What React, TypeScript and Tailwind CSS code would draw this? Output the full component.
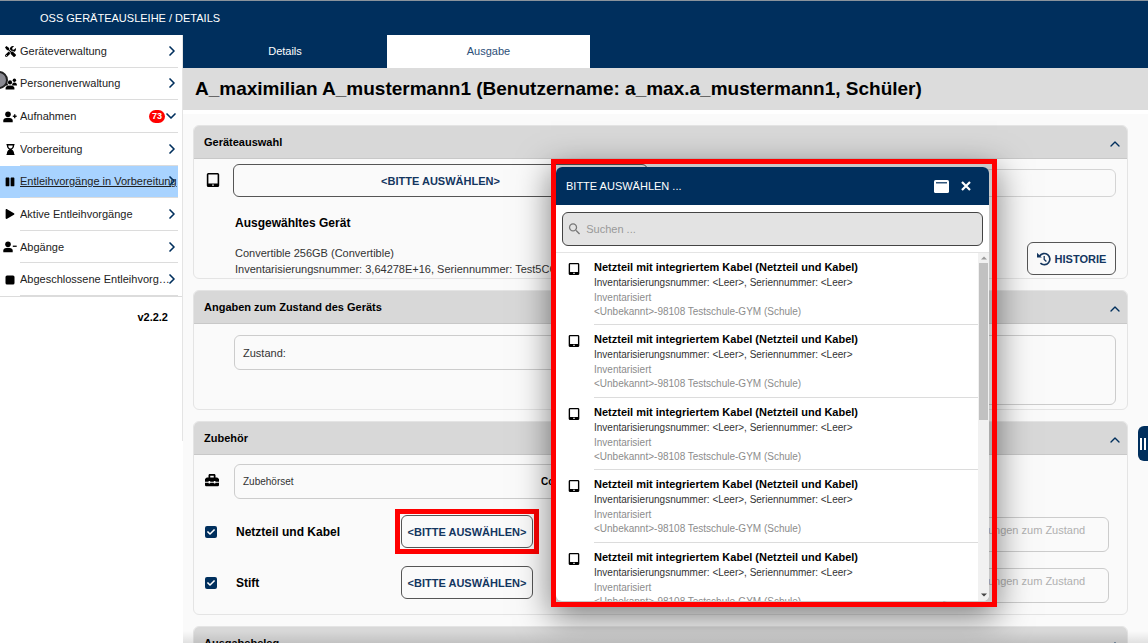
import type { ReactNode } from "react";
import {
  FaCheck,
  FaHourglassEnd,
  FaPause,
  FaPlay,
  FaToolbox,
  FaTools,
} from "react-icons/fa";
import { MdSearch } from "react-icons/md";
import { ChevronDown, ChevronRight, ChevronUp } from "lucide-react";

const PersonIcon = ({ plus = false }: { plus?: boolean }) => (
  <svg viewBox="0 0 14 12" className="h-3 w-3.5" fill="currentColor">
    <circle cx="5" cy="3.2" r="2.8" />
    <path d="M0.3 11.2V9.6C0.3 7.8 2 6.8 5 6.8s4.7 1 4.7 2.8v1.6z" />
    <path d="M9.8 4.6h3.9v1.3H9.8z" />
    {plus && <path d="M11.1 3.2h1.3v4h-1.3z" />}
  </svg>
);

const PeopleIcon = () => (
  <svg viewBox="0 0 14 12" className="h-3 w-3.5" fill="currentColor">
    <circle cx="2.6" cy="2.2" r="1.7" />
    <circle cx="11.4" cy="2.2" r="1.7" />
    <circle cx="7" cy="4.4" r="2.1" />
    <path d="M0 7.6C0 5.6 1 4.6 2.6 4.6c.9 0 1.5.3 1.9.8.1 1 .5 1.6 1 2.2z" />
    <path d="M14 7.6c0-2-1-3-2.6-3-.9 0-1.5.3-1.9.8-.1 1-.5 1.6-1 2.2z" />
    <path d="M2.6 11.5V10c0-1.6 1.6-2.6 4.4-2.6s4.4 1 4.4 2.6v1.5z" />
  </svg>
);

const SquareIcon = () => (
  <svg viewBox="0 0 10 10" className="size-2.5" fill="currentColor">
    <rect x="0.5" y="0.5" width="9" height="9" rx="1.5" />
  </svg>
);

const TabletIcon = ({ className }: { className: string }) => (
  <svg viewBox="0 0 14 14" className={className} fill="currentColor">
    <path
      fillRule="evenodd"
      d="M2.4 0h9.2A1.6 1.6 0 0 1 13.2 1.6v10.8a1.6 1.6 0 0 1-1.6 1.6H2.4A1.6 1.6 0 0 1 .8 12.4V1.6A1.6 1.6 0 0 1 2.4 0zM2.4 1.6v9h9.2v-9zM6.2 11.5v1.3h1.6v-1.3z"
    />
  </svg>
);

const WindowIcon = () => (
  <svg viewBox="0 0 15 13" className="h-[13px] w-[15px]">
    <rect width="15" height="13" rx="1.6" fill="#fff" />
    <rect x="2" y="2.2" width="11" height="1.2" fill="#002f5d" />
  </svg>
);

const HistoryIcon = () => (
  <svg viewBox="0 0 14 14" className="size-3.5" fill="none">
    <path
      d="M2.6 4A5.6 5.6 0 1 1 3.4 11.2"
      stroke="currentColor"
      strokeWidth="1.7"
    />
    <path d="M0 .8v4.6h4.8z" fill="currentColor" />
    <path d="M7.2 4v3.4l2.2 2" stroke="currentColor" strokeWidth="1.3" />
  </svg>
);

const navItems: {
  label: string;
  icon: ReactNode;
  active?: boolean;
  badge?: number;
}[] = [
  { label: "Geräteverwaltung", icon: <FaTools className="size-[11px]" /> },
  { label: "Personenverwaltung", icon: <PeopleIcon /> },
  { label: "Aufnahmen", icon: <PersonIcon plus />, badge: 73 },
  { label: "Vorbereitung", icon: <FaHourglassEnd className="size-[11px]" /> },
  {
    label: "Entleihvorgänge in Vorbereitung",
    icon: <FaPause className="size-2.5" />,
    active: true,
  },
  { label: "Aktive Entleihvorgänge", icon: <FaPlay className="size-2.5" /> },
  { label: "Abgänge", icon: <PersonIcon /> },
  { label: "Abgeschlossene Entleihvorgänge", icon: <SquareIcon /> },
];

const Sidebar = () => (
  <aside className="w-[183px] shrink-0 bg-white">
    <nav className="h-[406px] border-r border-[#e4e4e4]">
      <ul className="grid h-[262px] grid-cols-1 grid-rows-8 border-b border-[#dcdcdc]">
        {navItems.map(({ label, icon, active, badge }) => (
          <li
            key={label}
            className={active ? "mr-1 min-w-0 bg-[#a8d3ff]" : "mr-1 min-w-0"}
          >
            <a href="#" className="flex h-full items-center text-[#222]">
              <span className="flex w-5 shrink-0 items-center justify-center text-black">
                {icon}
              </span>
              <span className="flex h-full min-w-0 flex-1 items-center border-b border-[#dcdcdc]">
                <span
                  className={
                    active
                      ? "min-w-0 flex-1 whitespace-nowrap underline"
                      : "-mr-2 min-w-0 flex-1 truncate"
                  }
                >
                  {label}
                </span>
                {badge && (
                  <span className="z-10 -mr-0.5 rounded-full bg-[#f00] px-[3px] text-[9px] leading-[13px] font-bold text-white">
                    {badge}
                  </span>
                )}
                {badge ? (
                  <ChevronDown
                    className="-mr-px size-4 shrink-0 text-[#002f5d]"
                    strokeWidth={2.5}
                  />
                ) : (
                  <ChevronRight
                    className="-mr-0.5 size-4 shrink-0 text-[#002f5d]"
                    strokeWidth={2.5}
                  />
                )}
              </span>
            </a>
          </li>
        ))}
      </ul>
      <p className="mt-3 mr-3.5 text-right font-bold">v2.2.2</p>
    </nav>
  </aside>
);

const Panel = ({
  title,
  className,
  children,
}: {
  title: string;
  className: string;
  children?: ReactNode;
}) => (
  <section
    className={`overflow-hidden rounded-md border border-[#e4e4e4] ${className}`}
  >
    <h2 className="flex h-[33px] items-center justify-between border-b border-[#c8c8c8] bg-[#d8d8d8] pr-1 pl-2.5 font-bold">
      {title}
      <button type="button" aria-label={`${title} einklappen`}>
        <ChevronUp className="mt-1 size-4 text-[#002f5d]" strokeWidth={2} />
      </button>
    </h2>
    {children}
  </section>
);

const outlineButton =
  "rounded-md border border-[#555] bg-[#fafafa] font-bold text-[#14365f]";

const AccessoryRow = ({
  name,
  highlight,
}: {
  name: string;
  highlight?: boolean;
}) => (
  <div className="flex h-[51px] items-center pr-[18px] pl-[11px]">
    <label className="flex w-[190px] items-center gap-[19px] text-[12px] font-bold">
      <span className="relative flex size-3">
        <input
          type="checkbox"
          defaultChecked
          className="size-3 appearance-none rounded-xs bg-[#002f5d]"
        />
        <FaCheck className="absolute top-0.5 left-0.5 size-2 text-white" />
      </span>
      {name}
    </label>
    <div
      className={
        highlight
          ? "border-[5px] border-[#f00] p-px"
          : "border-[5px] border-transparent p-px"
      }
    >
      <button type="button" className={`h-[33px] w-[132px] ${outlineButton}`}>
        {"<BITTE AUSWÄHLEN>"}
      </button>
    </div>
    <textarea
      aria-label={`Anmerkungen zum Zustand ${name}`}
      placeholder="Anmerkungen zum Zustand"
      rows={1}
      className="mt-[5px] ml-auto h-[35px] w-[168px] resize-none rounded-md border border-[#ccc] px-2 py-1 leading-4 placeholder:text-[#b0b0b0]"
    />
  </div>
);

const PickerItem = () => (
  <li className="flex pl-3">
    <TabletIcon className="mt-2.5 size-3 shrink-0" />
    <div className="ml-3.5 flex-1 border-b border-[#dcdcdc] pt-1.5 text-[10px] leading-[14px] text-[#8c8c8c]">
      <p className="text-[11px] leading-4 font-bold text-black">
        Netzteil mit integriertem Kabel (Netzteil und Kabel)
      </p>
      <p className="leading-4 text-[#333]">
        {"Inventarisierungsnummer: <Leer>, Seriennummer: <Leer>"}
      </p>
      <p>Inventarisiert</p>
      <p>{"<Unbekannt>-98108 Testschule-GYM (Schule)"}</p>
    </div>
  </li>
);

const PickerDialog = () => (
  <div className="absolute top-[159px] left-[551px] h-[448px] w-[446px] border-[5px] border-[#f00] bg-black/20 bg-clip-padding pt-[3px] pr-[3px] pb-px shadow-[0_10px_32px_rgba(0,0,0,0.5)]">
    <div
      role="dialog"
      aria-label="Bitte auswählen"
      className="flex h-full flex-col overflow-hidden rounded-md bg-white"
    >
      <header className="flex h-[38px] shrink-0 items-center gap-2.5 bg-[#002f5d] pr-4 pl-2.5 text-white">
        <h2 className="flex-1">BITTE AUSWÄHLEN ...</h2>
        <button type="button" aria-label="Maximieren">
          <WindowIcon />
        </button>
        <button type="button" aria-label="Schließen">
          <svg viewBox="0 0 14 14" className="size-3.5">
            <path
              d="M3 3l8 8M11 3l-8 8"
              stroke="#fff"
              strokeWidth="2.2"
              fill="none"
            />
          </svg>
        </button>
      </header>
      <label className="mx-1.5 mt-[7px] flex h-[34px] shrink-0 items-center gap-1 rounded-md border border-[#444] bg-[#e3e3e3] px-1">
        <MdSearch className="size-4 text-[#777]" />
        <input
          type="text"
          aria-label="Suchen"
          placeholder="Suchen ..."
          className="w-full bg-transparent outline-none placeholder:text-[#999]"
        />
      </label>
      <div className="mt-1.5 flex min-h-0 flex-1 border-t border-[#e4e4e4]">
        <div className="flex-1 overflow-hidden">
          <ul className="grid h-[362px] grid-rows-5">
            {[0, 1, 2, 3, 4].map((i) => (
              <PickerItem key={i} />
            ))}
          </ul>
        </div>
        <div className="flex w-[11px] flex-col items-center bg-[#f1f1f1]">
          <svg viewBox="0 0 10 10" className="size-2.5">
            <path d="M2 6.5L5 3.5l3 3z" fill="#999" />
          </svg>
          <div className="h-[157px] w-[9px] bg-[#c1c1c1]" />
          <svg viewBox="0 0 10 10" className="mt-auto size-2.5">
            <path d="M2 2.5L5 5.5l3-3z" fill="#444" />
          </svg>
        </div>
      </div>
    </div>
  </div>
);

export default function App() {
  return (
    <div className="relative flex h-screen flex-col overflow-hidden bg-[#fafafa] font-['Liberation_Sans',Arial,sans-serif] text-[11px] leading-4 text-black">
      <header className="flex h-[35px] shrink-0 items-center border-t border-[#8a939c] bg-[#002f5d] pl-10 text-white">
        <h1>OSS GERÄTEAUSLEIHE / DETAILS</h1>
      </header>

      <div className="flex min-h-0 flex-1">
        <Sidebar />

        <main className="min-w-0 flex-1">
          <div role="tablist" className="flex h-[33px] bg-[#002f5d]">
            <button
              type="button"
              role="tab"
              className="w-[204px] pb-0.5 text-white"
            >
              Details
            </button>
            <button
              type="button"
              role="tab"
              aria-selected="true"
              className="w-[203px] bg-white pb-0.5 text-[#2c4f78]"
            >
              Ausgabe
            </button>
          </div>
          <h2 className="flex h-[42px] items-center bg-[#dcdcdc] pl-3 text-[19px] font-bold">
            A_maximilian A_mustermann1 (Benutzername: a_max.a_mustermann1,
            Schüler)
          </h2>
          <div className="h-1 bg-white" />

          <div className="flex flex-col gap-[11px] pt-[11px] pr-5 pl-2.5">
            <Panel title="Geräteauswahl" className="h-[154px]">
              <div className="flex items-end gap-2.5 pt-[5px] pr-[11px] pl-3">
                <TabletIcon className="mb-2.5 size-3.5 shrink-0" />
                <button
                  type="button"
                  className={`ml-[3px] h-[33px] w-[415px] ${outlineButton}`}
                >
                  {"<BITTE AUSWÄHLEN>"}
                </button>
                <input
                  type="text"
                  aria-label="Gerätenummer"
                  className="h-7 min-w-0 flex-1 rounded-md border border-[#d4d4d4] px-2"
                />
              </div>
              <div className="flex justify-between pr-[11px] pl-[41px]">
                <div className="pt-[18px]">
                  <h3 className="text-[12px] font-bold">Ausgewähltes Gerät</h3>
                  <p className="mt-3.5 text-[#333]">
                    Convertible 256GB (Convertible)
                    <br />
                    Inventarisierungsnummer: 3,64278E+16, Seriennummer: Test5CG
                  </p>
                </div>
                <button
                  type="button"
                  className={`mt-[45px] flex h-[33px] w-[89px] items-center justify-center gap-1 ${outlineButton}`}
                >
                  <HistoryIcon />
                  HISTORIE
                </button>
              </div>
            </Panel>

            <Panel
              title="Angaben zum Zustand des Geräts"
              className="h-[120px]"
            >
              <div className="flex items-start gap-2.5 pt-[11px] pr-[11px] pl-10">
                <label className="flex h-[35px] w-[414px] items-center gap-2 rounded-md border border-[#ccc] px-2 text-[#333]">
                  Zustand:
                  <input type="text" className="min-w-0 flex-1 outline-none" />
                </label>
                <textarea
                  aria-label="Anmerkungen"
                  className="h-[70px] min-w-0 flex-1 resize-none rounded-md border border-[#ccc]"
                />
              </div>
            </Panel>

            <Panel title="Zubehör" className="h-[194px]">
              <div className="flex items-center pt-[9px] pl-[11px]">
                <FaToolbox className="mb-1 size-3.5" />
                <div className="ml-[15px] flex h-[35px] w-[414px] items-center justify-between rounded-md border border-[#ccc] px-2 text-[10px]">
                  <span className="text-[#333]">Zubehörset</span>
                  <span className="w-[98px] font-bold">Convertible</span>
                </div>
              </div>
              <div className="pt-[7px]">
                <AccessoryRow name="Netzteil und Kabel" highlight />
                <AccessoryRow name="Stift" />
              </div>
            </Panel>

            <Panel title="Ausgabebeleg" className="h-[120px]" />
          </div>
        </main>
      </div>

      <PickerDialog />

      <div className="absolute right-0 bottom-0 left-[183px] h-3 bg-linear-to-b from-transparent to-black/10" />
      <div className="absolute top-[71px] -left-2.5 size-[18px] rounded-full border-2 border-[#222] bg-[#8a8a92]" />
      <button
        type="button"
        aria-label="Seitenleiste"
        className="absolute top-[426px] right-0 flex h-[35px] w-2.5 items-center justify-center gap-0.5 rounded-l-md bg-[#002f5d]"
      >
        <span className="h-3 w-0.5 bg-white" />
        <span className="h-3 w-0.5 bg-white" />
      </button>
    </div>
  );
}
